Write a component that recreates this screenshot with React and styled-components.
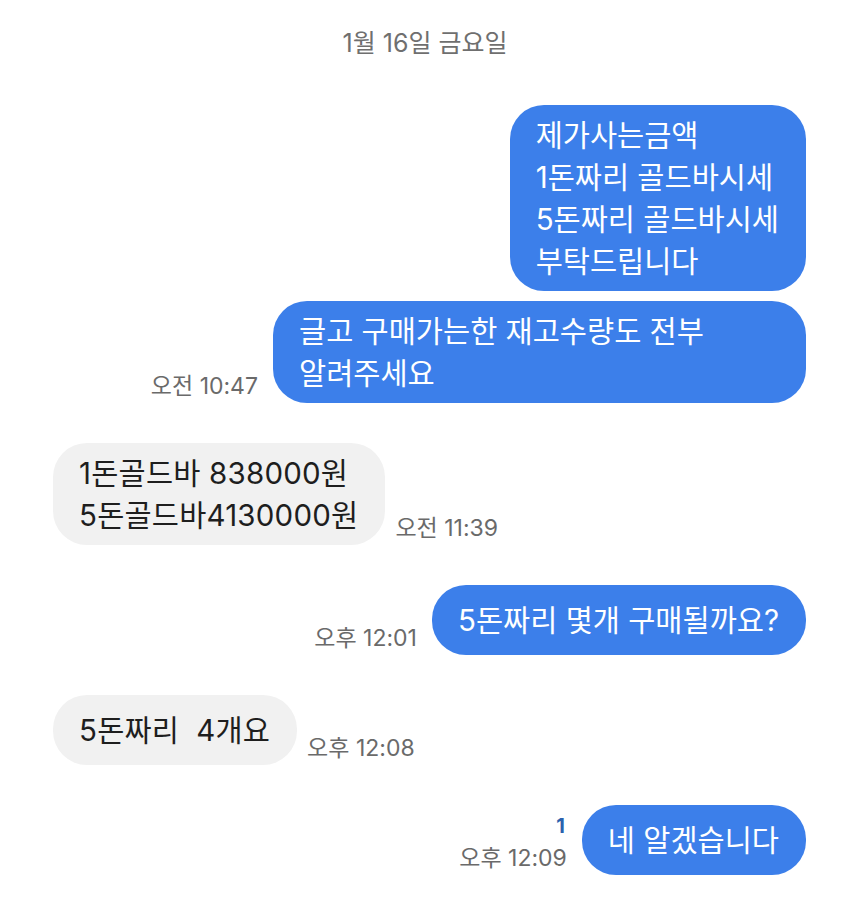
import styled, { createGlobalStyle } from 'styled-components'

const Global = createGlobalStyle`
    body {
        margin: 0;
        background: #ffffff;
        font-family: Inter, 'Noto Sans CJK KR', sans-serif;
    }
`

const messages = [
    { side: 'me', lines: ['제가사는금액', '1돈짜리 골드바시세', '5돈짜리 골드바시세', '부탁드립니다'], first: true },
    { side: 'me', text: '글고 구매가는한 재고수량도 전부 알려주세요', time: '오전 10:47', tight: true },
    { side: 'you', lines: ['1돈골드바 838000원', '5돈골드바4130000원'], time: '오전 11:39' },
    { side: 'me', text: '5돈짜리 몇개 구매될까요?', time: '오후 12:01' },
    { side: 'you', text: '5돈짜리  4개요', time: '오후 12:08' },
    { side: 'me', text: '네 알겠습니다', time: '오후 12:09', unread: 1 },
]

function App() {
    return (
        <Screen>
            <Global />
            <DateLabel>1월 16일 금요일</DateLabel>
            {messages.map((m, i) => (
                <Row key={i} $side={m.side} $tight={m.tight} $first={m.first}>
                    <Bubble $side={m.side}>
                        {m.lines
                            ? m.lines.map((l, j) => <Line key={j}>{l}</Line>)
                            : m.text}
                    </Bubble>
                    {m.time && (
                        <Meta $side={m.side}>
                            {m.unread && <Unread>{m.unread}</Unread>}
                            <Time>{m.time}</Time>
                        </Meta>
                    )}
                </Row>
            ))}
        </Screen>
    )
}

const Screen = styled.div`
    display: flex;
    flex-direction: column;
    width: 850px;
    height: 900px;
    padding: 28px 44px 0 53px;
    box-sizing: border-box;
    overflow: hidden;
`
const DateLabel = styled.div`
    text-align: center;
    font-size: 25px;
    line-height: 30px;
    color: #6f6f6f;
    margin-left: -9px;
`
const Row = styled.div`
    display: flex;
    flex-direction: ${p => (p.$side === 'me' ? 'row-reverse' : 'row')};
    align-items: flex-end;
    gap: ${p => (p.$side === 'me' ? '15px' : '10px')};
    margin-top: ${p => (p.$first ? '47px' : p.$tight ? '10px' : '40px')};
`
const Bubble = styled.div`
    display: flex;
    flex-direction: column;
    justify-content: center;
    box-sizing: border-box;
    min-height: 70px;
    max-width: 533px;
    padding: 9px 27px 9px 26px;
    border-radius: 34px;
    font-size: 29.5px;
    line-height: 42px;
    letter-spacing: ${p => (p.$side === 'me' ? '0' : '0.2px')};
    white-space: pre-wrap;
    word-break: keep-all;
    background: ${p => (p.$side === 'me' ? '#3c7fea' : '#f1f1f1')};
    color: ${p => (p.$side === 'me' ? '#ffffff' : '#1e1e1e')};
`
const Line = styled.div`
    white-space: pre;
`
const Meta = styled.div`
    display: flex;
    flex-direction: column;
    align-items: ${p => (p.$side === 'me' ? 'flex-end' : 'flex-start')};
    padding-bottom: 4px;
`
const Unread = styled.div`
    font-size: 20px;
    font-weight: 700;
    line-height: 26px;
    color: #2b62ad;
    margin-bottom: 6px;
    margin-right: 2px;
`
const Time = styled.div`
    font-size: 23px;
    line-height: 26px;
    color: #6a6a6a;
    white-space: nowrap;
`

export default App
